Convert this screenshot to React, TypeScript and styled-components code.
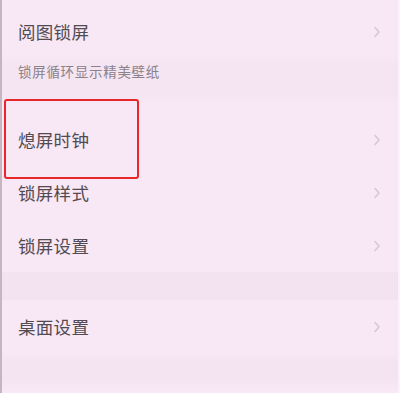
import styled, { createGlobalStyle } from "styled-components";

const GlobalStyle = createGlobalStyle`
  html, body {
    margin: 0;
    padding: 0;
    background: #f8e7f5;
  }
  body {
    font-family: "Noto Sans CJK SC", "Noto Sans", sans-serif;
  }
  * {
    box-sizing: border-box;
  }
`;

const Screen = styled.div`
  width: 400px;
  height: 393px;
  background: #f8e7f5;
  border-left: 2px solid #c4b6c1;
  border-right: 2px solid #fbf2fa;
  display: flex;
  flex-direction: column;
  overflow: hidden;
`;

const Row = styled.div<{ $height: number; $top?: number; $highlight?: boolean }>`
  position: relative;
  height: ${(p) => p.$height}px;
  flex-shrink: 0;
  display: flex;
  align-items: center;
  justify-content: space-between;
  padding: ${(p) => p.$top ?? 0}px 17px 0 16px;
  ${(p) =>
    p.$highlight &&
    `
    &::after {
      content: "";
      position: absolute;
      left: 2px;
      top: -14px;
      width: 131px;
      height: 76px;
      border: 2px solid #e8272b;
      border-radius: 3px;
    }
  `}
`;

const Label = styled.span`
  font-size: 17.5px;
  line-height: 24px;
  color: #524b50;
  letter-spacing: 0.3px;
`;

const Desc = styled.div`
  height: 61px;
  flex-shrink: 0;
  padding: 9px 16px 0;
  font-size: 13.5px;
  line-height: 20px;
  color: #8b8289;
  letter-spacing: 0.7px;
  background: linear-gradient(#f8e7f5 0, #f5e4f1 14px, #f5e4f1 44px, #f8e7f5 52px);
`;

const Gap = styled.div<{ $height: number }>`
  height: ${(p) => p.$height}px;
  flex-shrink: 0;
  background: #f3e2ef;
`;

const Footer = styled.div`
  flex: 1;
  background: linear-gradient(#f8e7f5 0, #f4e3f0 8px, #f4e3f0 26px, #f8e7f5 34px);
`;

const Chevron = () => (
  <svg width="8" height="12" viewBox="0 0 8 12">
    <path
      d="M2 1.5 L6 6 L2 10.5"
      fill="none"
      stroke="#d6c9d3"
      strokeWidth="1.6"
      strokeLinecap="round"
      strokeLinejoin="round"
    />
  </svg>
);

export default function App() {
  return (
    <>
      <GlobalStyle />
      <Screen>
        <Row $height={52} $top={12}>
          <Label>阅图锁屏</Label>
          <Chevron />
        </Row>
        <Desc>锁屏循环显示精美壁纸</Desc>
        <Row $height={53} $highlight>
          <Label>熄屏时钟</Label>
          <Chevron />
        </Row>
        <Row $height={53}>
          <Label>锁屏样式</Label>
          <Chevron />
        </Row>
        <Row $height={53}>
          <Label>锁屏设置</Label>
          <Chevron />
        </Row>
        <Gap $height={28} />
        <Row $height={54}>
          <Label>桌面设置</Label>
          <Chevron />
        </Row>
        <Footer />
      </Screen>
    </>
  );
}
